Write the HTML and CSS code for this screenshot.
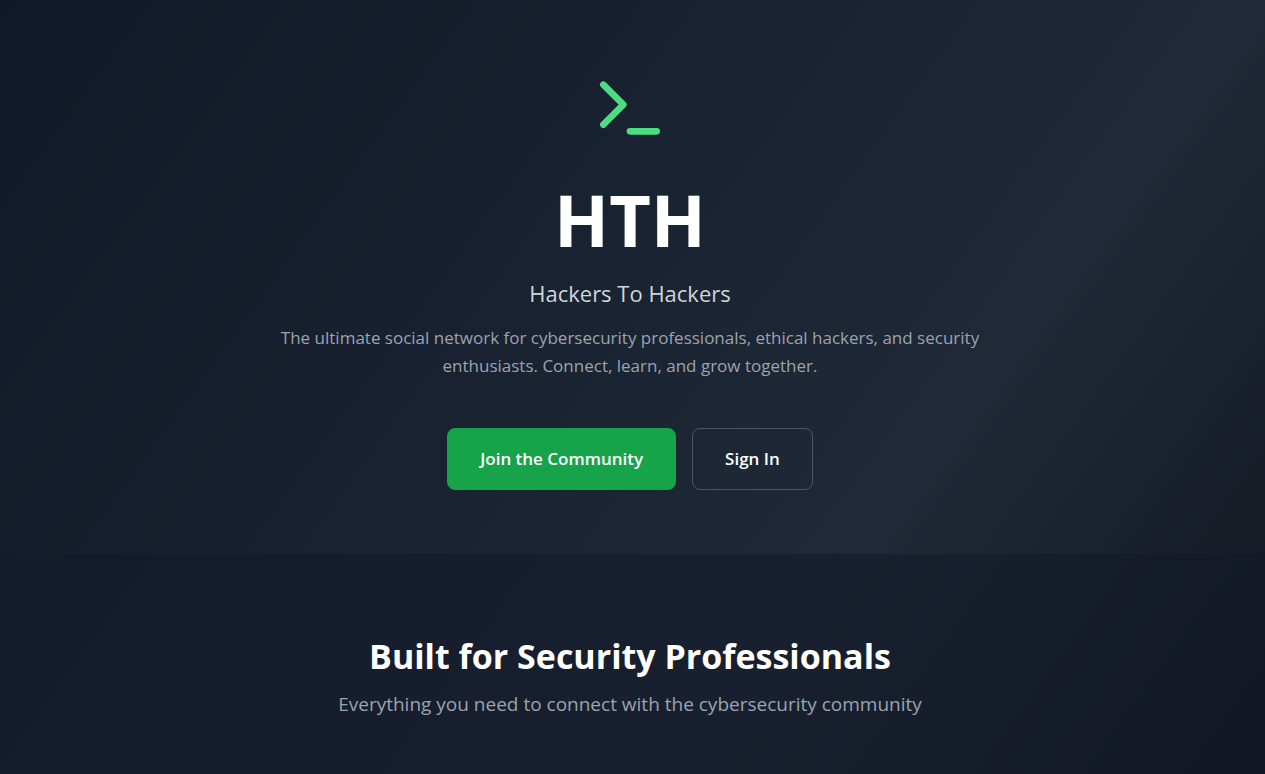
FILE: index.html
```html
<!DOCTYPE html>
<html lang="en">
<head>
    <meta charset="UTF-8">
    <meta name="viewport" content="width=device-width, initial-scale=1.0">
    <title>HTH - Hackers To Hackers</title>
    <link rel="stylesheet" href="styles.css">
</head>
<body>
    <main class="page">
        <section class="hero">
            <svg class="hero-icon" viewBox="0 0 24 24" fill="none" stroke="currentColor" stroke-width="2" stroke-linecap="round" stroke-linejoin="round" aria-hidden="true">
                <polyline points="4 17 10 11 4 5"></polyline>
                <line x1="12" x2="20" y1="19" y2="19"></line>
            </svg>
            <h1>HTH</h1>
            <p class="tagline">Hackers To Hackers</p>
            <p class="intro">The ultimate social network for cybersecurity professionals, ethical hackers, and security enthusiasts. Connect, learn, and grow together.</p>
            <div class="hero-actions">
                <a href="#join" class="btn btn-primary">Join the Community</a>
                <a href="#signin" class="btn btn-outline">Sign In</a>
            </div>
        </section>

        <section class="features">
            <h2>Built for Security Professionals</h2>
            <p class="features-text">Everything you need to connect with the cybersecurity community</p>
        </section>
    </main>
</body>
</html>
```
FILE: styles.css
```css
* {
    box-sizing: border-box;
}
body {
    margin: 0;
    font-family: 'Segoe UI', 'Open Sans', 'Noto Sans', sans-serif;
    background-color: #000000;
    color: #ffffff;
}
h1, h2, p {
    margin: 0;
}
.page {
    min-height: 100vh;
    background-image: linear-gradient(to bottom right, #111827, #1f2937, #000000); /* Navy to Slate to Black */
    background-size: 100% 1740px;
    background-repeat: no-repeat;
}
.hero {
    display: flex;
    flex-direction: column;
    align-items: center;
    padding: 68px 21px 64px 16px;
    text-align: center;
}
.hero-icon {
    width: 80px;
    height: 80px;
    color: #4ade80; /* Terminal Green */
}
h1 {
    margin-top: 35px;
    font-size: 72px;
    line-height: 72px;
    font-weight: 700;
}
.tagline {
    margin-top: 22px;
    font-size: 22px;
    line-height: 32px;
    color: #d1d5db;
}
.intro {
    max-width: 720px;
    margin-top: 15px;
    font-size: 17px;
    line-height: 28px;
    color: #9ca3af;
}
.hero-actions {
    display: flex;
    flex-wrap: wrap;
    justify-content: center;
    gap: 16px;
    margin-top: 48px;
}
.btn {
    padding: 16px 32px;
    border: 1px solid transparent;
    border-radius: 8px;
    font-size: 17px;
    line-height: 28px;
    font-weight: 600;
    color: #ffffff;
    text-decoration: none;
}
.btn-primary {
    background-color: #16a34a;
    border-color: #16a34a;
}
.btn-primary:hover {
    background-color: #15803d;
}
.btn-outline {
    border-color: #4b5563;
}
.btn-outline:hover {
    background-color: #1f2937;
}
.features {
    padding: 82px 21px 56px 16px;
    background-color: rgba(17, 24, 39, 0.5);
    text-align: center;
}
h2 {
    font-size: 34px;
    line-height: 40px;
    font-weight: 700;
}
.features-text {
    margin-top: 14px;
    font-size: 19px;
    line-height: 28px;
    color: #9ca3af;
}
```
